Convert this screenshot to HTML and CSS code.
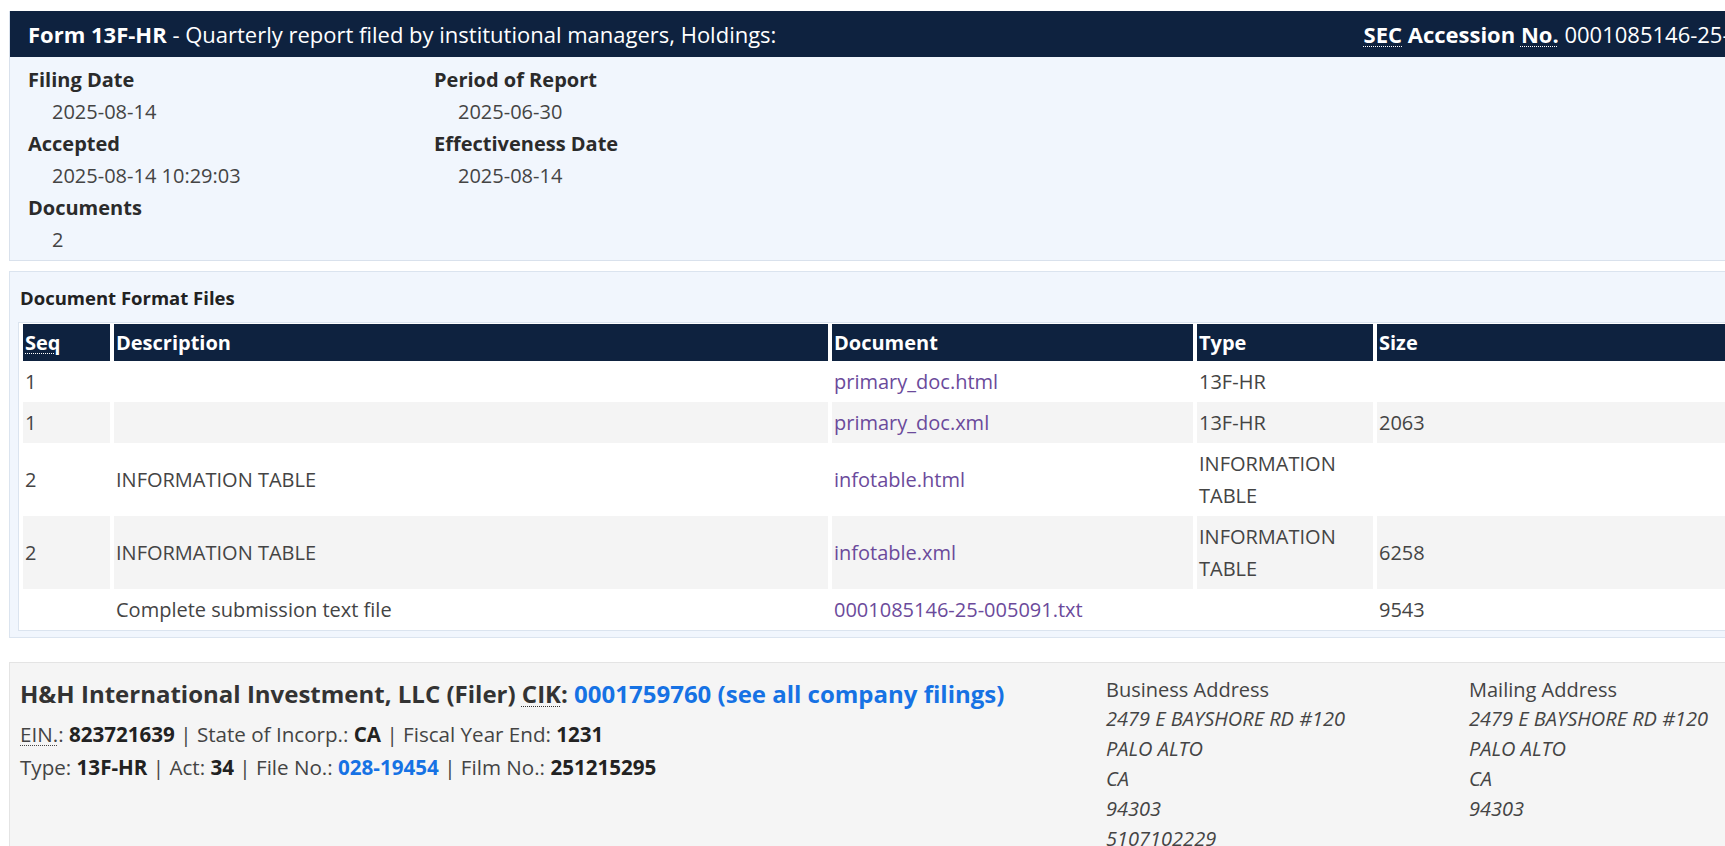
FILE: index.html
```html
<!DOCTYPE html>
<html lang="en">
<head>
<meta charset="utf-8">
<title>Form 13F-HR Filing Index</title>
<link rel="stylesheet" href="styles.css">
</head>
<body>
<div class="page">
  <section class="filing">
    <div class="filing-head">
      <div class="form-title"><strong>Form 13F-HR</strong> - Quarterly report filed by institutional managers, Holdings:</div>
      <div class="accession"><strong><abbr title="Securities and Exchange Commission">SEC</abbr> Accession <abbr title="Number">No.</abbr></strong> 0001085146-25-005091</div>
    </div>
    <div class="filing-info">
      <div class="info-col">
        <div class="info-label">Filing Date</div>
        <div class="info-value">2025-08-14</div>
        <div class="info-label">Accepted</div>
        <div class="info-value">2025-08-14 10:29:03</div>
        <div class="info-label">Documents</div>
        <div class="info-value">2</div>
      </div>
      <div class="info-col">
        <div class="info-label">Period of Report</div>
        <div class="info-value">2025-06-30</div>
        <div class="info-label">Effectiveness Date</div>
        <div class="info-value">2025-08-14</div>
      </div>
    </div>
  </section>

  <section class="docs">
    <h3 class="docs-title">Document Format Files</h3>
    <table class="doc-table">
      <thead>
        <tr>
          <th class="c-seq"><abbr title="Sequence Number">Seq</abbr></th>
          <th class="c-desc">Description</th>
          <th class="c-doc">Document</th>
          <th class="c-type">Type</th>
          <th class="c-size">Size</th>
        </tr>
      </thead>
      <tbody>
        <tr>
          <td>1</td><td></td><td><a href="#">primary_doc.html</a></td><td>13F-HR</td><td></td>
        </tr>
        <tr class="alt">
          <td>1</td><td></td><td><a href="#">primary_doc.xml</a></td><td>13F-HR</td><td>2063</td>
        </tr>
        <tr class="tall">
          <td>2</td><td>INFORMATION TABLE</td><td><a href="#">infotable.html</a></td><td>INFORMATION<br>TABLE</td><td></td>
        </tr>
        <tr class="alt tall">
          <td>2</td><td>INFORMATION TABLE</td><td><a href="#">infotable.xml</a></td><td>INFORMATION<br>TABLE</td><td>6258</td>
        </tr>
        <tr>
          <td></td><td>Complete submission text file</td><td><a href="#">0001085146-25-005091.txt</a></td><td></td><td>9543</td>
        </tr>
      </tbody>
    </table>
  </section>

  <section class="company">
    <div class="company-main">
      <div class="company-name">H&amp;H International Investment, LLC (Filer) <abbr title="Central Index Key">CIK</abbr>: <a class="blue" href="#">0001759760 (see all company filings)</a></div>
      <div class="ident"><abbr title="Employer Identification Number">EIN.</abbr>: <strong>823721639</strong> | State of Incorp.: <strong>CA</strong> | Fiscal Year End: <strong>1231</strong></div>
      <div class="ident">Type: <strong>13F-HR</strong> | Act: <strong>34</strong> | File No.: <a class="blue" href="#"><strong>028-19454</strong></a> | Film No.: <strong>251215295</strong></div>
    </div>
    <div class="address">
      <div class="addr-head">Business Address</div>
      <div class="addr-line">2479 E BAYSHORE RD #120</div>
      <div class="addr-line">PALO ALTO</div>
      <div class="addr-line">CA</div>
      <div class="addr-line">94303</div>
      <div class="addr-line">5107102229</div>
    </div>
    <div class="address">
      <div class="addr-head">Mailing Address</div>
      <div class="addr-line">2479 E BAYSHORE RD #120</div>
      <div class="addr-line">PALO ALTO</div>
      <div class="addr-line">CA</div>
      <div class="addr-line">94303</div>
    </div>
  </section>
</div>
</body>
</html>
```

FILE: styles.css
```css
html, body {
  overflow: hidden;
}
body {
  margin: 0;
  padding: 11px 0 0 9px;
  font-family: "Open Sans", "Noto Sans", "Liberation Sans", sans-serif;
  font-size: 20px;
  color: #333;
  background: #fff;
}
.page {
  width: 1815px;
  display: flex;
  flex-direction: column;
}
abbr {
  text-decoration: underline dotted;
  text-underline-offset: 3px;
  text-decoration-thickness: 1px;
}
a {
  text-decoration: none;
  color: #6b4a9b;
}
a.blue,
a.blue strong {
  color: #1672e4;
}

/* Filing header */
.filing {
  border: 1px solid #d9e1ec;
  border-top: none;
  background: #f1f6fd;
}
.filing-head {
  background: #0e223f;
  color: #fff;
  height: 46px;
  display: flex;
  align-items: center;
  justify-content: space-between;
  padding: 0 18px 0 18px;
  font-size: 22px;
  white-space: nowrap;
}
.filing-head strong {
  font-weight: 700;
}
.filing-info {
  display: flex;
  padding: 7px 18px 4px 18px;
}
.info-col {
  width: 406px;
}
.info-label {
  font-weight: 700;
  line-height: 32px;
  color: #2b2b2b;
}
.info-value {
  line-height: 32px;
  padding-left: 24px;
  color: #444;
}

/* Documents */
.docs {
  margin-top: 10px;
  background: #f1f6fd;
  border: 1px solid #dbe4ef;
  padding: 0 0 6px 10px;
}
.docs-title {
  margin: 0;
  padding-top: 2px;
  font-size: 18.5px;
  font-weight: 700;
  color: #222;
  line-height: 48px;
}
.doc-table {
  border-collapse: separate;
  border-spacing: 4px 0;
  margin-left: -2px;
  background: #fff;
  border: 1px solid #dbe4ef;
  width: 1780px;
}
.doc-table th {
  background: #0e223f;
  color: #fff;
  text-align: left;
  font-weight: 700;
  height: 37px;
  padding: 0 2px;
  border-top: 1px solid #fff;
}
.doc-table td {
  padding: 0 2px;
  height: 41px;
  color: #444;
  vertical-align: middle;
  line-height: 32px;
}
.doc-table tr.tall td {
  height: 73px;
}
.doc-table tr.alt td {
  background: #f4f4f4;
}
.c-seq { width: 83px; }
.c-desc { width: 710px; }
.c-doc { width: 357px; }
.c-type { width: 172px; }

/* Company */
.company {
  margin-top: 24px;
  background: #f5f5f5;
  border: 1px solid #e4e4e4;
  display: flex;
  padding: 7px 10px 10px 10px;
  height: 200px;
}
.company-main {
  flex: 0 0 1086px;
}
.company-name {
  font-size: 24px;
  font-weight: 700;
  color: #333;
  line-height: 48px;
}
.ident {
  font-size: 20.6px;
  line-height: 33px;
  color: #444;
}
.ident strong {
  color: #222;
}
.address {
  flex: 0 0 363px;
  padding-top: 6px;
}
.addr-head {
  line-height: 28px;
  color: #444;
}
.addr-line {
  line-height: 30px;
  font-style: italic;
  color: #444;
}
```
